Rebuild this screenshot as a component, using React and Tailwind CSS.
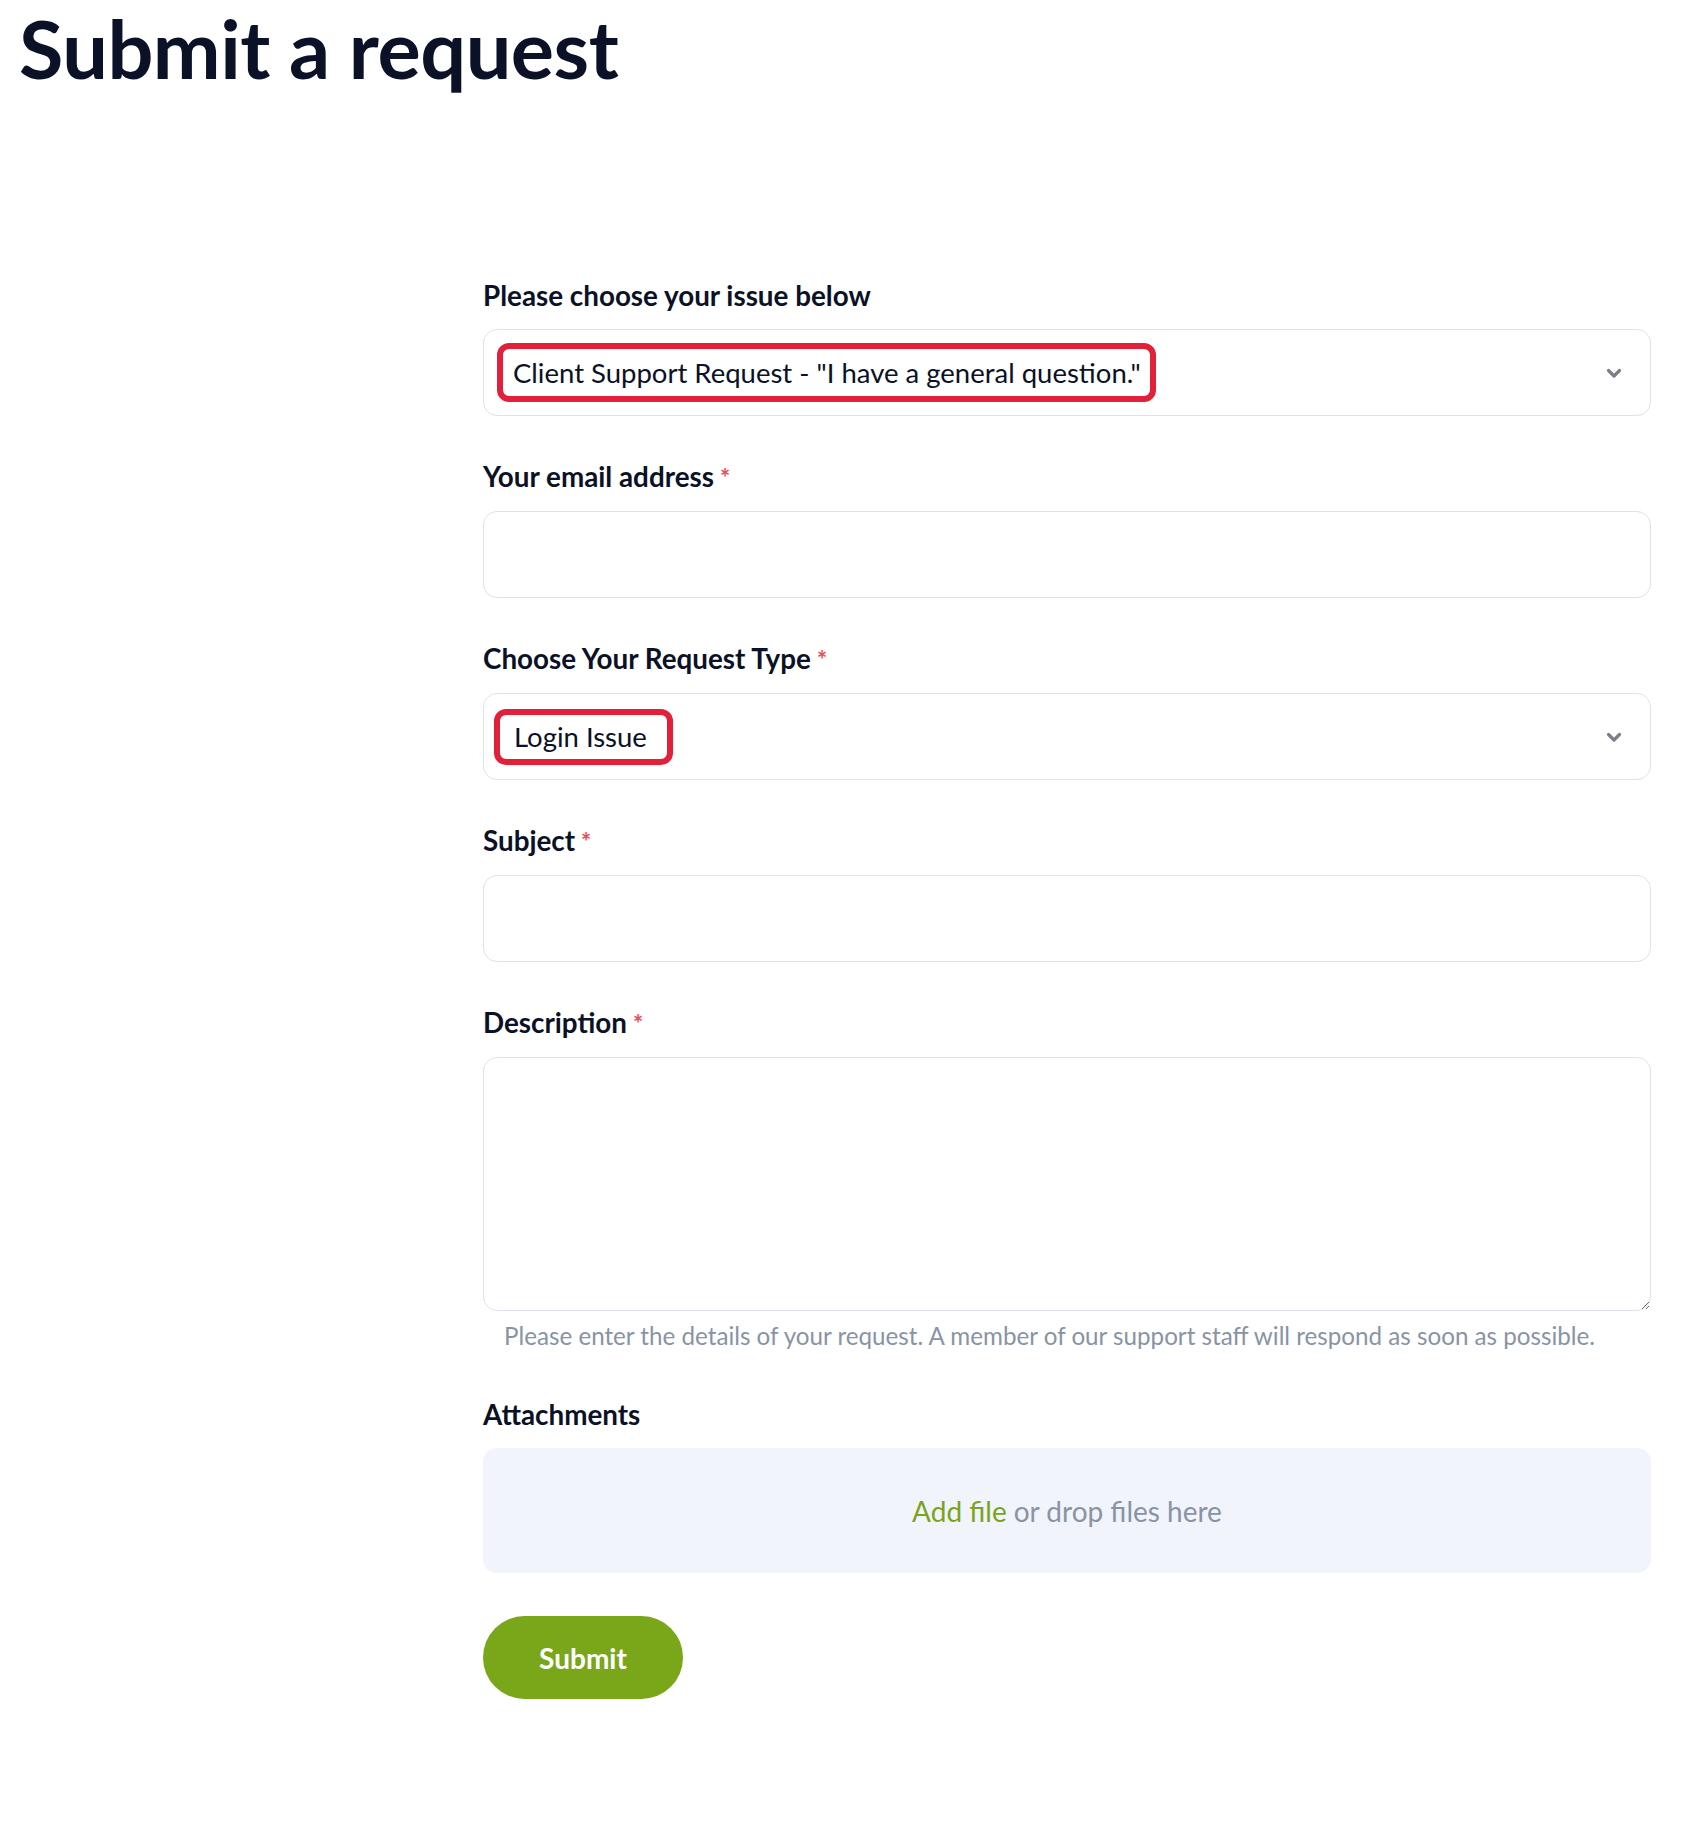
import React from 'react';

function Chevron() {
  return (
    <svg width="18" height="18" viewBox="0 0 18 18" className="text-[#7a7f88]">
      <path d="M3.5 6.5 L9 12 L14.5 6.5" fill="none" stroke="currentColor" strokeWidth="3.2" strokeLinecap="round" strokeLinejoin="round" />
    </svg>
  );
}

function Label({ children, required }) {
  return (
    <label className="block text-[27.8px] leading-[32px] font-bold text-[#0b1126] mb-[17px]">
      {children}
      {required && <span className="text-[#ef4b55] text-[24px] ml-[6px]">*</span>}
    </label>
  );
}

function Box({ children, className = '' }) {
  return (
    <div className={'h-[87px] rounded-[14px] border border-[#dde2eb] bg-white flex items-center ' + className}>
      {children}
    </div>
  );
}

export default function App() {
  return (
    <div className="min-h-screen bg-white pb-[100px]" style={{ fontFamily: 'Lato, "Noto Sans", sans-serif' }}>
      <h1 className="pl-[19px] pt-[4px] text-[81px] leading-[88px] font-bold text-[#0b1126] tracking-[-0.5px]">
        Submit a request
      </h1>

      <form className="ml-[483px] w-[1168px] mt-[188px]" onSubmit={(e) => e.preventDefault()}>
        <Label>Please choose your issue below</Label>
        <Box className="justify-between pl-[13px] pr-[27px]">
          <div className="border-[6px] border-[#e3203a] rounded-[12px] pl-[10px] pr-[9px] h-[59px] flex items-center text-[27.5px] text-[#0b1126]">
            Client Support Request - "I have a general question."
          </div>
          <Chevron />
        </Box>

        <div className="mt-[45px]">
          <Label required>Your email address</Label>
          <Box />
        </div>

        <div className="mt-[45px]">
          <Label required>Choose Your Request Type</Label>
          <Box className="justify-between pl-[10px] pr-[27px]">
            <div className="border-[6px] border-[#e3203a] rounded-[12px] pl-[14px] pr-[20px] h-[56px] flex items-center text-[27.5px] text-[#0b1126]">
              Login Issue
            </div>
            <Chevron />
          </Box>
        </div>

        <div className="mt-[45px]">
          <Label required>Subject</Label>
          <Box />
        </div>

        <div className="mt-[45px]">
          <Label required>Description</Label>
          <textarea className="block w-full h-[254px] rounded-[14px] border border-[#dde2eb] bg-white resize-y" />
          <p className="mt-[10px] pl-[21px] text-[24.2px] leading-[30px] text-[#8993a6]">
            Please enter the details of your request. A member of our support staff will respond as soon as possible.
          </p>
        </div>

        <div className="mt-[48px]">
          <Label>Attachments</Label>
          <div className="h-[125px] rounded-[14px] bg-[#f1f4fa] flex items-center justify-center text-[28px] text-[#8993a6]">
            <span className="text-[#7aa41c] mr-[7px]">Add file</span> or drop files here
          </div>
        </div>

        <button
          type="submit"
          className="mt-[43px] w-[200px] h-[83px] rounded-full bg-[#7aa619] text-white text-[28px] font-bold"
        >
          Submit
        </button>
      </form>
    </div>
  );
}
